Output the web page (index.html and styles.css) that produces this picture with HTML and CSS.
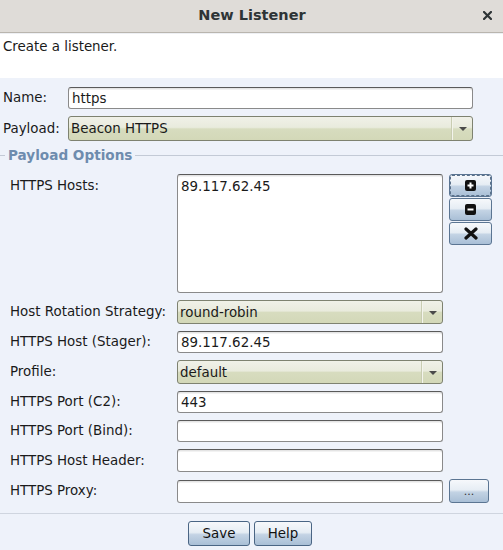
FILE: index.html
```html
<!DOCTYPE html>
<html>
<head>
<meta charset="utf-8">
<link rel="stylesheet" href="styles.css">
</head>
<body>
<div class="window">
  <div class="titlebar">
    <span></span>
    <span class="title">New Listener</span>
    <span class="close"><svg width="9" height="9" viewBox="0 0 9 9"><path d="M1 1L8 8M8 1L1 8" stroke="#2e3436" stroke-width="2.2" stroke-linecap="square"/></svg></span>
  </div>
  <div class="intro">Create a listener.</div>

  <div class="top-form">
    <span class="lbl">Name:</span>
    <div class="input h22">https</div>
    <span class="lbl">Payload:</span>
    <div class="select h25"><span class="val">Beacon HTTPS</span><span class="arrow"><i></i></span></div>
  </div>

  <div class="legend"><span>Payload Options</span></div>

  <div class="opts">
    <span class="lbl top">HTTPS Hosts:</span>
    <div class="textarea">89.117.62.45</div>
    <div class="btnstack">
      <button class="btn icon focus"><svg width="11" height="11" viewBox="0 0 11 11"><rect x="0" y="0" width="11" height="11" rx="2" fill="#111"/><path d="M5.5 2.5V8.5M2.5 5.5H8.5" stroke="#fff" stroke-width="2"/></svg></button>
      <button class="btn icon"><svg width="11" height="11" viewBox="0 0 11 11"><rect x="0" y="0" width="11" height="11" rx="2" fill="#111"/><path d="M2.5 5.5H8.5" stroke="#fff" stroke-width="2"/></svg></button>
      <button class="btn icon"><svg width="14" height="13" viewBox="0 0 14 13"><path d="M2 2L12 11M12 2L2 11" stroke="#111" stroke-width="3.2" stroke-linecap="round"/></svg></button>
    </div>

    <span class="lbl">Host Rotation Strategy:</span>
    <div class="select h24"><span class="val">round-robin</span><span class="arrow"><i></i></span></div>
    <span></span>

    <span class="lbl">HTTPS Host (Stager):</span>
    <div class="input h22">89.117.62.45</div>
    <span></span>

    <span class="lbl">Profile:</span>
    <div class="select h24"><span class="val">default</span><span class="arrow"><i></i></span></div>
    <span></span>

    <span class="lbl">HTTPS Port (C2):</span>
    <div class="input h22">443</div>
    <span></span>

    <span class="lbl">HTTPS Port (Bind):</span>
    <div class="input h22"></div>
    <span></span>

    <span class="lbl">HTTPS Host Header:</span>
    <div class="input h23"></div>
    <span></span>

    <span class="lbl">HTTPS Proxy:</span>
    <div class="input h23"></div>
    <button class="btn dots">...</button>
  </div>

  <div class="sep"></div>
  <div class="actions">
    <button class="btn action save">Save</button>
    <button class="btn action help">Help</button>
  </div>
</div>
</body>
</html>
```
FILE: styles.css
```css
* { box-sizing: border-box; }
html, body { margin: 0; padding: 0; }
body {
  width: 503px;
  height: 550px;
  overflow: hidden;
  background: #eef2fa;
  font-family: "DejaVu Sans", sans-serif;
  font-size: 13.4px;
  color: #1a1a1a;
}
.window { width: 503px; }

.titlebar {
  height: 33px;
  background: #dfdcd8;
  border-bottom: 1px solid #b9b5ae;
  display: grid;
  grid-template-columns: 1fr auto 1fr;
  align-items: center;
  padding-bottom: 2px;
}
.title {
  font-weight: bold;
  font-size: 14.5px;
  color: #2e3436;
  padding-left: 1px;
}
.close {
  justify-self: end;
  padding-right: 11px;
  display: flex;
  align-items: center;
}

.intro {
  background: #ffffff;
  height: 45px;
  border-top: 1px solid #eef0f4;
  padding: 5px 3px;
  line-height: 16px;
}

.top-form {
  margin-top: 9px;
  padding-left: 3px;
  display: grid;
  grid-template-columns: 65px 405px;
  row-gap: 7px;
  align-items: center;
}

.lbl { line-height: 16px; white-space: nowrap; }
.lbl.top { align-self: start; padding-top: 4px; }

.input, .textarea {
  background: #ffffff;
  border: 1px solid #8a8a8a;
  border-top-color: #5a5a5a;
  border-radius: 3px;
  box-shadow: inset 0 1px 0 #e4e4e4, inset 0 2px 0 #f2f2f2;
  padding: 2px 3px 0;
  line-height: 17px;
}
.h22 { height: 22px; }
.h23 { height: 23px; }
.h24 { height: 24px; }
.h25 { height: 25px; }

.textarea { height: 119px; padding-top: 3px; }

.select {
  display: flex;
  align-items: stretch;
  border: 1px solid #7e8270;
  border-radius: 3px;
  background: linear-gradient(#f0f1e8 0%, #e9ebdd 45%, #d7dcbf 52%, #d3d8b8 100%);
}
.select .val {
  flex: 1;
  padding: 0 2px;
  display: flex;
  align-items: center;
}
.select .arrow {
  width: 20px;
  border-left: 1px solid #f3f4ec;
  box-shadow: -1px 0 0 #c9cdb2;
  display: flex;
  align-items: center;
  justify-content: center;
}
.select .arrow i {
  width: 0; height: 0;
  border-left: 4px solid transparent;
  border-right: 4px solid transparent;
  border-top: 4px solid #4a4a4a;
  margin-top: 1px;
}

.legend {
  margin-top: 5px;
  height: 18px;
  display: flex;
  align-items: center;
}
.legend::before {
  content: "";
  width: 5px;
  height: 1px;
  background: #c3cad6;
}
.legend::after {
  content: "";
  flex: 1;
  height: 1px;
  background: #c3cad6;
}
.legend span {
  padding: 0 3px;
  font-weight: bold;
  font-size: 13.6px;
  color: #6e8cae;
  line-height: 18px;
}

.opts {
  margin-top: 10px;
  padding-left: 10px;
  display: grid;
  grid-template-columns: 161px 266px 43px;
  column-gap: 6px;
  row-gap: 7px;
  align-items: center;
}

.btn {
  font-family: "DejaVu Sans", sans-serif;
  font-size: 13.4px;
  color: #111;
  border: 1px solid #5b7592;
  border-radius: 3px;
  background: linear-gradient(#f6f8fb 0%, #e6edf4 45%, #c3d3e4 55%, #a9bfd6 100%);
  padding: 0;
  margin: 0;
  display: flex;
  align-items: center;
  justify-content: center;
}
.btnstack {
  align-self: start;
  display: flex;
  flex-direction: column;
  gap: 1px;
}
.btn.icon { height: 23px; width: 43px; }
.btn.focus { outline: 1px dashed #5a7089; outline-offset: -2px; }
.btn.dots {
  width: 40px;
  height: 24px;
  align-items: flex-end;
  padding-bottom: 6px;
  font-size: 11px;
  line-height: 8px;
  color: #333;
}

.sep {
  margin-top: 10px;
  height: 1px;
  background: #cfd5df;
}
.actions {
  margin-top: 7px;
  display: flex;
  justify-content: center;
  gap: 4px;
  padding-right: 3px;
}
.btn.action {
  height: 25px;
  border-color: #4a6584;
  line-height: 16px;
}
.save { width: 62px; }
.help { width: 58px; }
```
